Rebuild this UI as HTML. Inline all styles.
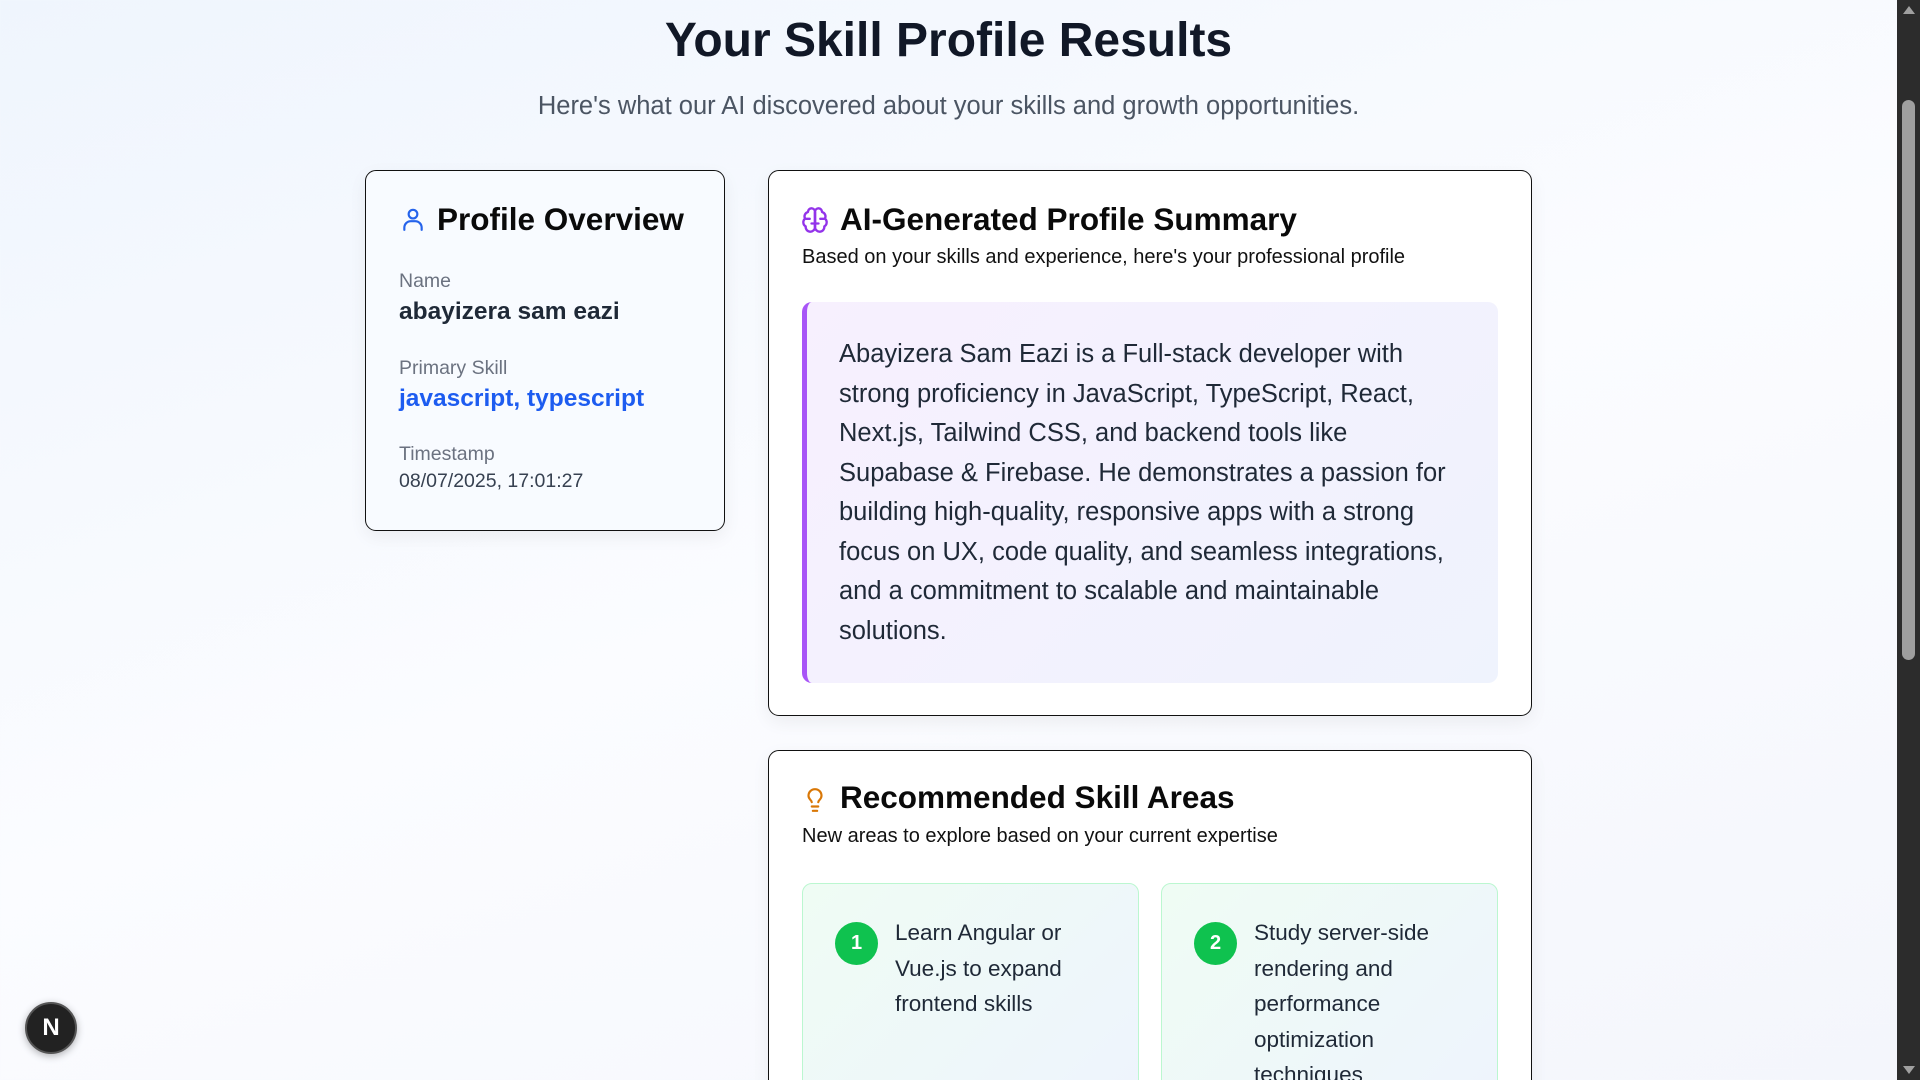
<!DOCTYPE html>
<html><head><meta charset="utf-8"><style>
*{margin:0;padding:0;box-sizing:border-box}
html,body{width:1920px;height:1080px;overflow:hidden}
body{font-family:"Liberation Sans",sans-serif;background:linear-gradient(160deg,#eff5fd 0%,#fbfcff 50%,#f4f6fc 100%);position:relative;color:#111827}
.abs{position:absolute}
h1{position:absolute;left:0;width:1897px;text-align:center;top:13px;font-size:48px;font-weight:bold;color:#111827}
.sub{position:absolute;left:0;width:1897px;text-align:center;top:92px;font-size:25.5px;color:#4b5563}
.card{position:absolute;background:#fff;border:1.5px solid #111;border-radius:11px;box-shadow:0 6px 18px rgba(0,0,0,0.06)}
.h2{position:absolute;font-size:31.5px;font-weight:bold;color:#0a0a0a;white-space:nowrap}
.desc{position:absolute;font-size:20px;color:#111;white-space:nowrap}
.lbl{position:absolute;font-size:19.5px;color:#6b7280}
.quote{position:absolute;left:802px;top:302px;width:696px;height:381px;border-left:5px solid #a855f7;border-radius:10px;background:linear-gradient(135deg,#f7f0fe 0%,#eff3fd 100%)}
.qt{position:absolute;left:839px;top:335px;width:630px;font-size:25.5px;line-height:39.5px;color:#1f2937}
.rec{position:absolute;top:883px;width:337px;height:220px;border:1.5px solid #bbf7d0;border-radius:10px;background:linear-gradient(135deg,#effcf4 0%,#eef4fd 100%)}
.num{position:absolute;width:43px;height:43px;border-radius:50%;background:#0fc24f;color:#fff;font-weight:bold;font-size:20px;text-align:center;line-height:43px}
.rt{position:absolute;font-size:22.5px;line-height:35.5px;color:#1f2937;width:210px}
</style></head><body>
<h1>Your Skill Profile Results</h1>
<div class="sub">Here's what our AI discovered about your skills and growth opportunities.</div>

<div class="card" style="left:365px;top:170px;width:360px;height:361px;background:#f8fbff"></div>
<svg class="abs" style="left:400px;top:206px" width="26" height="26" viewBox="0 0 24 24" fill="none" stroke="#2563eb" stroke-width="2" stroke-linecap="round"><circle cx="12" cy="7.5" r="4"/><path d="M4 22v-2a6 6 0 0 1 6-6h4a6 6 0 0 1 6 6v2"/></svg>
<div class="h2" style="left:437px;top:201px">Profile Overview</div>
<div class="lbl" style="left:399px;top:270px">Name</div>
<div class="abs" style="left:399px;top:298px;font-size:24.5px;font-weight:bold;color:#1f2937">abayizera sam eazi</div>
<div class="lbl" style="left:399px;top:357px">Primary Skill</div>
<div class="abs" style="left:399px;top:385px;font-size:24.5px;font-weight:bold;color:#1d5cf0">javascript, typescript</div>
<div class="lbl" style="left:399px;top:443px">Timestamp</div>
<div class="abs" style="left:399px;top:470px;font-size:19.5px;color:#374151">08/07/2025, 17:01:27</div>

<div class="card" style="left:768px;top:170px;width:764px;height:546px"></div>
<svg class="abs" style="left:801px;top:206px" width="28" height="28" viewBox="0 0 24 24" fill="none" stroke="#9333ea" stroke-width="2" stroke-linecap="round" stroke-linejoin="round"><path d="M12 5a3 3 0 1 0-5.997.125 4 4 0 0 0-2.526 5.77 4 4 0 0 0 .556 6.588A4 4 0 1 0 12 18Z"/><path d="M12 5a3 3 0 1 1 5.997.125 4 4 0 0 1 2.526 5.77 4 4 0 0 1-.556 6.588A4 4 0 1 1 12 18Z"/><path d="M12 5v13M4.5 11h3M16.5 11h3M9 15h6"/></svg>
<div class="h2" style="left:840px;top:201px">AI-Generated Profile Summary</div>
<div class="desc" style="left:802px;top:246px">Based on your skills and experience, here's your professional profile</div>
<div class="quote"></div>
<div class="qt">Abayizera Sam Eazi is a Full-stack developer with strong proficiency in JavaScript, TypeScript, React, Next.js, Tailwind CSS, and backend tools like Supabase &amp; Firebase. He demonstrates a passion for building high-quality, responsive apps with a strong focus on UX, code quality, and seamless integrations, and a commitment to scalable and maintainable solutions.</div>

<div class="card" style="left:768px;top:750px;width:764px;height:400px"></div>
<svg class="abs" style="left:802px;top:786px" width="26" height="28" viewBox="0 0 24 24" fill="none" stroke="#d97706" stroke-width="2" stroke-linecap="round"><path d="M9 18h6M10 22h4"/><path d="M15 14c.2-1 .7-1.7 1.5-2.5A5 5 0 0 0 18 8 6 6 0 0 0 6 8c0 1 .2 2.2 1.5 3.5.7.7 1.3 1.5 1.5 2.5"/></svg>
<div class="h2" style="left:840px;top:779px">Recommended Skill Areas</div>
<div class="desc" style="left:802px;top:825px">New areas to explore based on your current expertise</div>
<div class="rec" style="left:802px"></div>
<div class="rec" style="left:1161px"></div>
<div class="num" style="left:835px;top:922px">1</div>
<div class="rt" style="left:895px;top:915px">Learn Angular or Vue.js to expand frontend skills</div>
<div class="num" style="left:1194px;top:922px">2</div>
<div class="rt" style="left:1254px;top:915px">Study server-side rendering and performance optimization techniques</div>

<div class="abs" style="left:25px;top:1002px;width:52px;height:52px;border-radius:50%;background:#222;border:2px solid #555;color:#fff;font-size:24px;text-align:center;line-height:48px;font-weight:bold;box-shadow:0 2px 8px rgba(0,0,0,.3)">N</div>

<div class="abs" style="left:1897px;top:0;width:23px;height:1080px;background:#2c2c2c"></div>
<div class="abs" style="left:1902px;top:100px;width:13px;height:560px;border-radius:7px;background:#9f9f9f"></div>
<div class="abs" style="left:1903px;top:6px;width:0;height:0;border-left:6px solid transparent;border-right:6px solid transparent;border-bottom:8px solid #a0a0a0"></div>
<div class="abs" style="left:1903px;top:1066px;width:0;height:0;border-left:6px solid transparent;border-right:6px solid transparent;border-top:8px solid #a0a0a0"></div>
</body></html>
